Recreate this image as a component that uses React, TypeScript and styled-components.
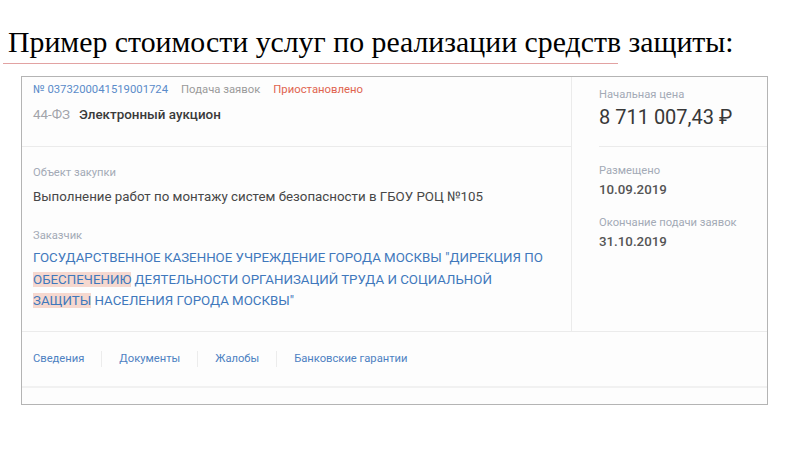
import React from "react";
import styled, { createGlobalStyle } from "styled-components";

const GlobalStyle = createGlobalStyle`
  html, body { margin: 0; padding: 0; background: #ffffff; }
  #root { width: 800px; height: 450px; overflow: hidden; }
`;

const Page = styled.div`
  width: 800px;
  height: 450px;
  padding-top: 25px;
  box-sizing: border-box;
`;

const Title = styled.h1`
  margin: 0 0 0 8px;
  font-family: "Liberation Serif", "Times New Roman", serif;
  font-weight: 400;
  font-size: 29.8px;
  line-height: 33px;
  color: #000;
  white-space: nowrap;
`;

const Underline = styled.div`
  margin: 5px 0 0 3px;
  width: 615px;
  height: 1px;
  background: #e2a2a2;
`;

const Card = styled.div`
  margin: 12px 0 0 21px;
  width: 747px;
  height: 329px;
  box-sizing: border-box;
  border: 1px solid #b4b4b4;
  background: #fdfdfd;
  display: flex;
  flex-direction: column;
  font-family: Roboto, "Noto Sans", sans-serif;
`;

const Top = styled.div`
  display: grid;
  grid-template-columns: 550px 1fr;
  height: 254px;
  border-bottom: 1px solid #ebebeb;
`;

const LeftCol = styled.div`
  border-right: 1px solid #ebebeb;
  display: flex;
  flex-direction: column;
`;

const Header = styled.div`
  height: 70px;
  box-sizing: border-box;
  padding: 6px 11px 0;
  border-bottom: 1px solid #ebebeb;
  display: flex;
  flex-direction: column;
  gap: 10px;
`;

const MetaRow = styled.div`
  display: flex;
  gap: 13px;
  font-size: 11.3px;
  line-height: 14px;
  white-space: nowrap;
`;

const Meta = styled.span<{ $tone: "blue" | "gray" | "red" }>`
  color: ${(p) =>
    p.$tone === "blue" ? "#5a8bc9" : p.$tone === "red" ? "#e0644f" : "#9a9a9a"};
`;

const LawRow = styled.div`
  display: flex;
  gap: 9px;
  font-size: 13.4px;
  line-height: 16px;
  white-space: nowrap;
`;

const Law = styled.span`
  color: #a2a4aa;
`;

const Kind = styled.span`
  color: #3a3a3a;
  font-weight: 500;
`;

const Body = styled.div`
  padding: 19px 11px 0;
  display: flex;
  flex-direction: column;
`;

const Label = styled.div<{ $mt?: number }>`
  font-size: 11.2px;
  line-height: 14px;
  color: #a3aab6;
  margin-top: ${(p) => p.$mt ?? 0}px;
  white-space: nowrap;
`;

const Text = styled.div<{ $mt?: number }>`
  font-size: 13.3px;
  line-height: 16px;
  color: #474747;
  margin-top: ${(p) => p.$mt ?? 0}px;
  white-space: nowrap;
`;

const Customer = styled.div`
  margin-top: 4px;
  font-size: 13.3px;
  line-height: 21.5px;
  color: #3f78bc;
  white-space: nowrap;
`;

const Mark = styled.span`
  background: #f6d8cf;
`;

const RightCol = styled.div`
  display: flex;
  flex-direction: column;
`;

const PriceBlock = styled.div`
  height: 70px;
  box-sizing: border-box;
  margin-left: 27px;
  padding-top: 11px;
  border-bottom: 1px solid #ebebeb;
`;

const Price = styled.div`
  margin-top: 3px;
  font-size: 20px;
  line-height: 24px;
  color: #383838;
  white-space: nowrap;
`;

const Dates = styled.div`
  padding: 17px 0 0 27px;
  display: flex;
  flex-direction: column;
`;

const DateValue = styled.div`
  margin-top: 4px;
  font-size: 13.3px;
  line-height: 16px;
  color: #555555;
  font-weight: 500;
`;

const Tabs = styled.div`
  height: 56px;
  box-sizing: border-box;
  padding-left: 11px;
  display: flex;
  align-items: center;
  border-bottom: 2px solid #f1f1f1;
`;

const Tab = styled.span<{ $first?: boolean }>`
  font-size: 11.2px;
  line-height: 16px;
  color: #4d81c2;
  padding: 0 17px;
  padding-left: ${(p) => (p.$first ? 0 : 17)}px;
  border-left: ${(p) => (p.$first ? "none" : "1px solid #ececec")};
  white-space: nowrap;
`;

export default function App() {
  const tabs = ["Сведения", "Документы", "Жалобы", "Банковские гарантии"];
  return (
    <>
      <GlobalStyle />
      <Page>
        <Title>Пример стоимости услуг по реализации средств защиты:</Title>
        <Underline />
        <Card>
          <Top>
            <LeftCol>
              <Header>
                <MetaRow>
                  <Meta $tone="blue">№ 0373200041519001724</Meta>
                  <Meta $tone="gray">Подача заявок</Meta>
                  <Meta $tone="red">Приостановлено</Meta>
                </MetaRow>
                <LawRow>
                  <Law>44-ФЗ</Law>
                  <Kind>Электронный аукцион</Kind>
                </LawRow>
              </Header>
              <Body>
                <Label>Объект закупки</Label>
                <Text $mt={9}>
                  Выполнение работ по монтажу систем безопасности в ГБОУ РОЦ №105
                </Text>
                <Label $mt={24}>Заказчик</Label>
                <Customer>
                  ГОСУДАРСТВЕННОЕ КАЗЕННОЕ УЧРЕЖДЕНИЕ ГОРОДА МОСКВЫ "ДИРЕКЦИЯ ПО
                  <br />
                  <Mark>ОБЕСПЕЧЕНИЮ</Mark> ДЕЯТЕЛЬНОСТИ ОРГАНИЗАЦИЙ ТРУДА И СОЦИАЛЬНОЙ
                  <br />
                  <Mark>ЗАЩИТЫ</Mark> НАСЕЛЕНИЯ ГОРОДА МОСКВЫ"
                </Customer>
              </Body>
            </LeftCol>
            <RightCol>
              <PriceBlock>
                <Label>Начальная цена</Label>
                <Price>8 711 007,43 ₽</Price>
              </PriceBlock>
              <Dates>
                <Label>Размещено</Label>
                <DateValue>10.09.2019</DateValue>
                <Label $mt={18}>Окончание подачи заявок</Label>
                <DateValue>31.10.2019</DateValue>
              </Dates>
            </RightCol>
          </Top>
          <Tabs>
            {tabs.map((t, i) => (
              <Tab key={t} $first={i === 0}>
                {t}
              </Tab>
            ))}
          </Tabs>
        </Card>
      </Page>
    </>
  );
}
